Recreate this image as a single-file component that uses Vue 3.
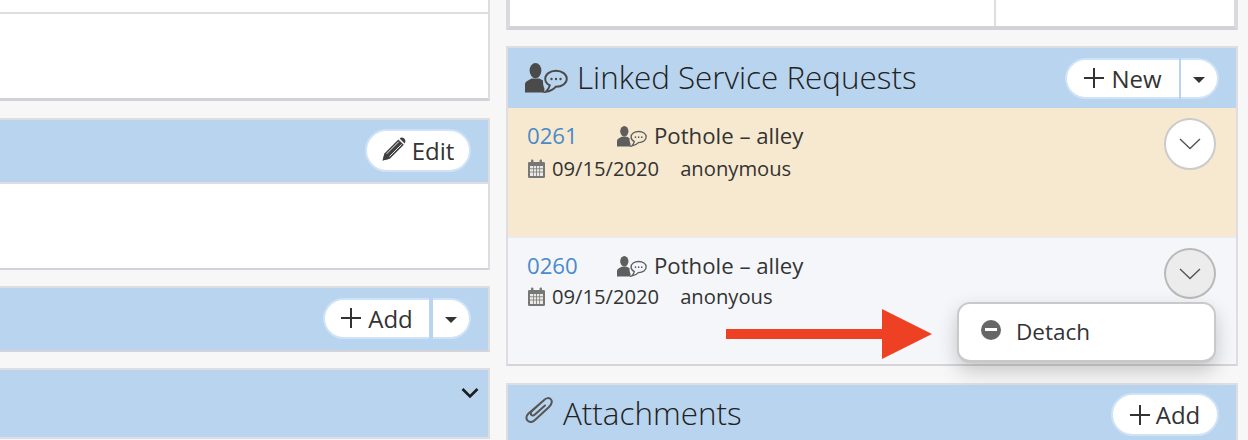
<script setup>
const requests = [
  { id: '0261', user: 'anonymous', tone: 'cream', open: false },
  { id: '0260', user: 'anonyous', tone: 'pale', open: true },
]
</script>

<template>
  <div class="page">
    <svg class="defs" aria-hidden="true">
      <symbol id="user-comment" viewBox="0 0 43 30">
        <ellipse cx="10.5" cy="7.6" rx="5.9" ry="7.6" fill="currentColor" />
        <path d="M0 29.5V21.5C0 18.6 2.5 17.6 6.8 15.4H14.2C15.6 16.2 17 16.8 18 17.4C17.8 20.6 18.6 23.6 19.4 25.4V29.5H1Q0 29.5 0 29.5Z" fill="currentColor" />
        <path d="M31 7.8C24.9 7.8 20.2 11.3 20.2 15.8C20.2 18.6 21.9 21 24.8 22.4C24.3 24.8 22.6 27.2 20.6 28.9C24.4 28.3 28.3 26.5 30.6 23.8H31C37.1 23.8 41.8 20.3 41.8 15.8C41.8 11.3 37.1 7.8 31 7.8Z" fill="none" stroke="currentColor" stroke-width="1.9" />
        <circle cx="26.5" cy="16" r="1.2" fill="currentColor" />
        <circle cx="31" cy="16" r="1.2" fill="currentColor" />
        <circle cx="35.5" cy="16" r="1.2" fill="currentColor" />
      </symbol>
      <symbol id="calendar" viewBox="0 0 17 19">
        <path d="M1.2 3H15.8Q17 3 17 4.2V17.8Q17 19 15.8 19H1.2Q0 19 0 17.8V4.2Q0 3 1.2 3Z" fill="#777" />
        <rect x="3" y="0.4" width="2.4" height="4.4" rx="1" fill="#777" />
        <rect x="11.6" y="0.4" width="2.4" height="4.4" rx="1" fill="#777" />
        <g fill="#eceae4">
          <rect x="2" y="7" width="3" height="2.4" /><rect x="5.7" y="7" width="2.4" height="2.4" /><rect x="8.9" y="7" width="2.4" height="2.4" /><rect x="12" y="7" width="3" height="2.4" />
          <rect x="2" y="10.2" width="3" height="2.4" /><rect x="5.7" y="10.2" width="2.4" height="2.4" /><rect x="8.9" y="10.2" width="2.4" height="2.4" /><rect x="12" y="10.2" width="3" height="2.4" />
          <rect x="2" y="13.4" width="3" height="3.6" /><rect x="5.7" y="13.4" width="2.4" height="3.6" /><rect x="8.9" y="13.4" width="2.4" height="3.6" /><rect x="12" y="13.4" width="3" height="3.6" />
        </g>
      </symbol>
      <symbol id="plus" viewBox="0 0 20 20">
        <path d="M10 0V20M0 10H20" stroke="#333" stroke-width="2" fill="none" />
      </symbol>
    </svg>

    <main class="columns">
      <section class="col col-left">
        <div class="panel top-left">
          <div class="strip"></div>
          <div class="blank"></div>
        </div>

        <div class="panel p-edit">
          <header class="head head-edit">
            <button class="pill solo">
              <svg class="pencil" viewBox="0 0 24 24" width="24" height="24" aria-hidden="true">
                <path d="M0.6 23.6L2.4 16.4L16.4 2.4L21.8 7.8L7.8 21.8Z" fill="#404040" />
                <path d="M4.6 16.8L16.8 4.6M7.4 19.6L19.6 7.4" stroke="#fff" stroke-width="0.9" />
                <path d="M17.6 1.6C19 0.2 20.8 0.2 22.2 1.6C23.8 3.2 23.8 5 22.6 6.6Z" fill="#404040" />
                <path d="M2.3 17.6L6.6 21.9L0.6 23.6Z" fill="#404040" />
              </svg>
              <span>Edit</span>
            </button>
          </header>
          <div class="edit-body"></div>
        </div>

        <div class="panel p-add">
          <header class="head head-add">
            <div class="split split-wide">
              <button class="pill left-part">
                <svg class="plus" aria-hidden="true"><use href="#plus" /></svg>
                <span>Add</span>
              </button>
              <button class="pill right-part"><i class="caret"></i></button>
            </div>
          </header>
        </div>

        <div class="panel p-fold">
          <header class="head head-fold">
            <svg class="fold" viewBox="0 0 18 12" width="18" height="12" aria-hidden="true">
              <path d="M1.5 2L9 9.5L16.5 2" fill="none" stroke="#1c1c1c" stroke-width="2.6" />
            </svg>
          </header>
        </div>
      </section>

      <section class="col col-right">
        <div class="panel top-right">
          <div class="cell-main"></div>
          <div class="cell-side"></div>
        </div>

        <div class="panel p-linked">
          <header class="head head-linked">
            <svg class="big-icon" aria-hidden="true"><use href="#user-comment" /></svg>
            <h2>Linked Service Requests</h2>
            <div class="split split-new">
              <button class="pill left-part">
                <svg class="plus" aria-hidden="true"><use href="#plus" /></svg>
                <span>New</span>
              </button>
              <button class="pill right-part"><i class="caret"></i></button>
            </div>
          </header>

          <article v-for="r in requests" :key="r.id" class="req" :class="r.tone">
            <div class="req-text">
              <div class="line-one">
                <a class="req-id">{{ r.id }}</a>
                <svg class="small-icon" aria-hidden="true"><use href="#user-comment" /></svg>
                <span>Pothole – alley</span>
              </div>
              <div class="line-two">
                <svg class="cal" aria-hidden="true"><use href="#calendar" /></svg>
                <span class="date">09/15/2020</span>
                <span>{{ r.user }}</span>
              </div>
            </div>
            <button class="round" :class="{ active: r.open }">
              <svg viewBox="0 0 22 12" width="22" height="12" aria-hidden="true">
                <path d="M1 1L11 10.5L21 1" fill="none" stroke="#555" stroke-width="1.4" />
              </svg>
            </button>
            <div v-if="r.open" class="menu">
              <i class="minus"></i>
              <span class="menu-label">Detach</span>
            </div>
            <svg v-if="r.open" class="arrow" viewBox="0 0 206 50" width="206" height="50" aria-hidden="true">
              <path d="M0 20H156V0L206 25L156 50V30H0Z" fill="#ee4023" />
            </svg>
          </article>
        </div>

        <div class="panel p-attach">
          <header class="head head-attach">
            <svg class="clip" viewBox="0 0 28 26" width="28" height="26" aria-hidden="true">
              <path d="M18 4L3.5 16.5C0.5 19.5 1 22.5 3 24C5 25.5 8 25 10.5 22.5L24 10C27 7 27.5 4.5 26 2.5C24.5 0.5 21.5 0.5 18.5 3.5L7 14C5.5 15.5 5.5 17 6.5 18C7.5 19 9 18.5 10.5 17L20 8.5" fill="none" stroke="#555" stroke-width="2" stroke-linecap="round" />
            </svg>
            <h2>Attachments</h2>
            <button class="pill solo attach-add">
              <svg class="plus" aria-hidden="true"><use href="#plus" /></svg>
              <span>Add</span>
            </button>
          </header>
        </div>
      </section>
    </main>
  </div>
</template>

<style>
html, body { margin: 0; background: #f7f7f7; }
</style>

<style scoped>
.page {
  width: 1248px;
  height: 440px;
  overflow: hidden;
  background: #f7f7f7;
  font-family: "Open Sans", "Noto Sans", sans-serif;
  color: #333;
}
.defs { position: absolute; width: 0; height: 0; }
.columns { display: flex; gap: 16px; align-items: flex-start; }
.col { display: flex; flex-direction: column; }
.col-left { width: 490px; }
.col-right { width: 732px; }

.panel { box-sizing: border-box; border: 2px solid #dedee2; }
.head { display: flex; align-items: center; background: #b9d4ee; box-sizing: border-box; }
h2 { margin: 0; font-size: 31.4px; font-weight: 300; color: #222; line-height: 40px; }

/* left column */
.top-left { height: 101px; border-top: 0; border-left: 0; border-bottom: 3px solid #d2d2d8; background: #fff; }
.strip { height: 12px; border-bottom: 2px solid #dedee0; }
.blank { height: 84px; }
.p-edit { margin-top: 17px; border-left: 0; border-bottom-color: #d2d2d8; height: 152px; background: #fff; }
.head-edit { height: 64px; justify-content: flex-end; padding: 0 17px 2px 0; border-bottom: 2px solid #dedee0; }
.p-add { margin-top: 16px; border-left: 0; border-bottom-color: #d4d4da; height: 66px; }
.head-add { height: 62px; justify-content: flex-end; padding: 0 17px 2px 0; }
.p-fold { margin-top: 16px; border-left: 0; height: 71px; }
.head-fold { height: 67px; justify-content: flex-end; padding: 0 9px 22px 0; }

/* right column */
.top-right { display: flex; height: 30px; border-top: 0; border-width: 0 4px 4px 4px; border-color: #dadade; border-bottom-color: #d2d2d8; background: #fff; }
.cell-main { width: 484px; border-right: 2px solid #dedee0; }
.p-linked { margin-top: 16px; height: 320px; border-bottom-color: #d4d4da; }
.head-linked { height: 60px; padding: 0 17px 0 17px; }
.head-linked h2 { flex: 1; margin-top: -2px; }
.big-icon { width: 43px; height: 30px; margin: 0 9px 0 0; color: #4a4a4a; }
.req { position: relative; box-sizing: border-box; display: flex; justify-content: space-between; }
.cream { height: 128px; background: #f7e9cf; }
.pale { height: 126px; background: #f5f6f9; border-top: 2px solid #ebebee; }
.req-text { padding: 12px 0 0 19px; }
.line-one { display: flex; align-items: center; font-size: 22.2px; line-height: 32px; color: #333; }
.req-id { width: 90px; color: #4a8ac9; }
.small-icon { width: 30px; height: 21px; margin-right: 7px; color: #5e5e5e; }
.line-two { display: flex; align-items: center; font-size: 20.2px; line-height: 32px; color: #333; }
.pale .line-two { margin-top: -2px; }
.cal { width: 17px; height: 19px; margin: 0 7px 0 1px; }
.date { margin-right: 21px; }

.round {
  box-sizing: border-box;
  width: 52px;
  height: 52px;
  margin: 10px 20px 0 0;
  padding: 0;
  border: 2px solid #cbcbcb;
  border-radius: 50%;
  background: #fff;
  display: flex;
  align-items: center;
  justify-content: center;
}
.round.active { background: #ececec; border-color: #b9b9b9; height: 51px; }

.menu {
  position: absolute;
  left: 449px;
  top: 64px;
  box-sizing: border-box;
  width: 259px;
  height: 61px;
  display: flex;
  align-items: center;
  padding-left: 22px;
  gap: 15px;
  background: #fff;
  border: 2px solid #c9c9c9;
  border-bottom-width: 3px;
  border-radius: 13px;
  box-shadow: 0 8px 20px rgba(0, 0, 0, 0.2);
  font-size: 22.5px;
  z-index: 2;
}
.menu-label { margin-top: -2px; }
.minus {
  position: relative;
  flex: none;
  width: 20px;
  height: 20px;
  margin-top: -4px;
  border-radius: 50%;
  background: #666;
}
.minus::after {
  content: "";
  position: absolute;
  left: 4px;
  right: 4px;
  top: 8px;
  height: 3px;
  background: #fff;
}
.arrow { position: absolute; left: 218px; top: 71px; z-index: 3; }

.p-attach { margin-top: 17px; height: 80px; }
.head-attach { height: 78px; padding: 0 17px 22px 17px; }
.clip { margin: -6px 10px 0 0; }
.head-attach h2 { flex: 1; }
.attach-add { margin-top: 3px; }

/* buttons */
.pill {
  box-sizing: border-box;
  display: flex;
  align-items: center;
  justify-content: center;
  background: #fff;
  border: 2px solid #cfe3f8;
  padding: 0;
  font-family: inherit;
  font-size: 24px;
  color: #333;
}
.solo { width: 106px; height: 43px; border-radius: 22px; gap: 6px; }
.solo.attach-add { width: 108px; }
.pencil { margin-top: -2px; }
.plus { width: 20px; height: 20px; }
.split { display: flex; }
.split .pill { height: 41px; }
.left-part { border-radius: 21px 0 0 21px; gap: 7px; border-right: 0; }
.right-part { border-radius: 0 21px 21px 0; border-left: 0; }
.split-wide .left-part { width: 106px; }
.split-wide .right-part { width: 38px; margin-left: 4px; }
.split-new .left-part { width: 114px; }
.split-new .right-part { width: 38px; margin-left: 2px; }
.caret {
  width: 0;
  height: 0;
  margin-top: 4px;
  border-left: 6.5px solid transparent;
  border-right: 6.5px solid transparent;
  border-top: 6.5px solid #333;
}
</style>
